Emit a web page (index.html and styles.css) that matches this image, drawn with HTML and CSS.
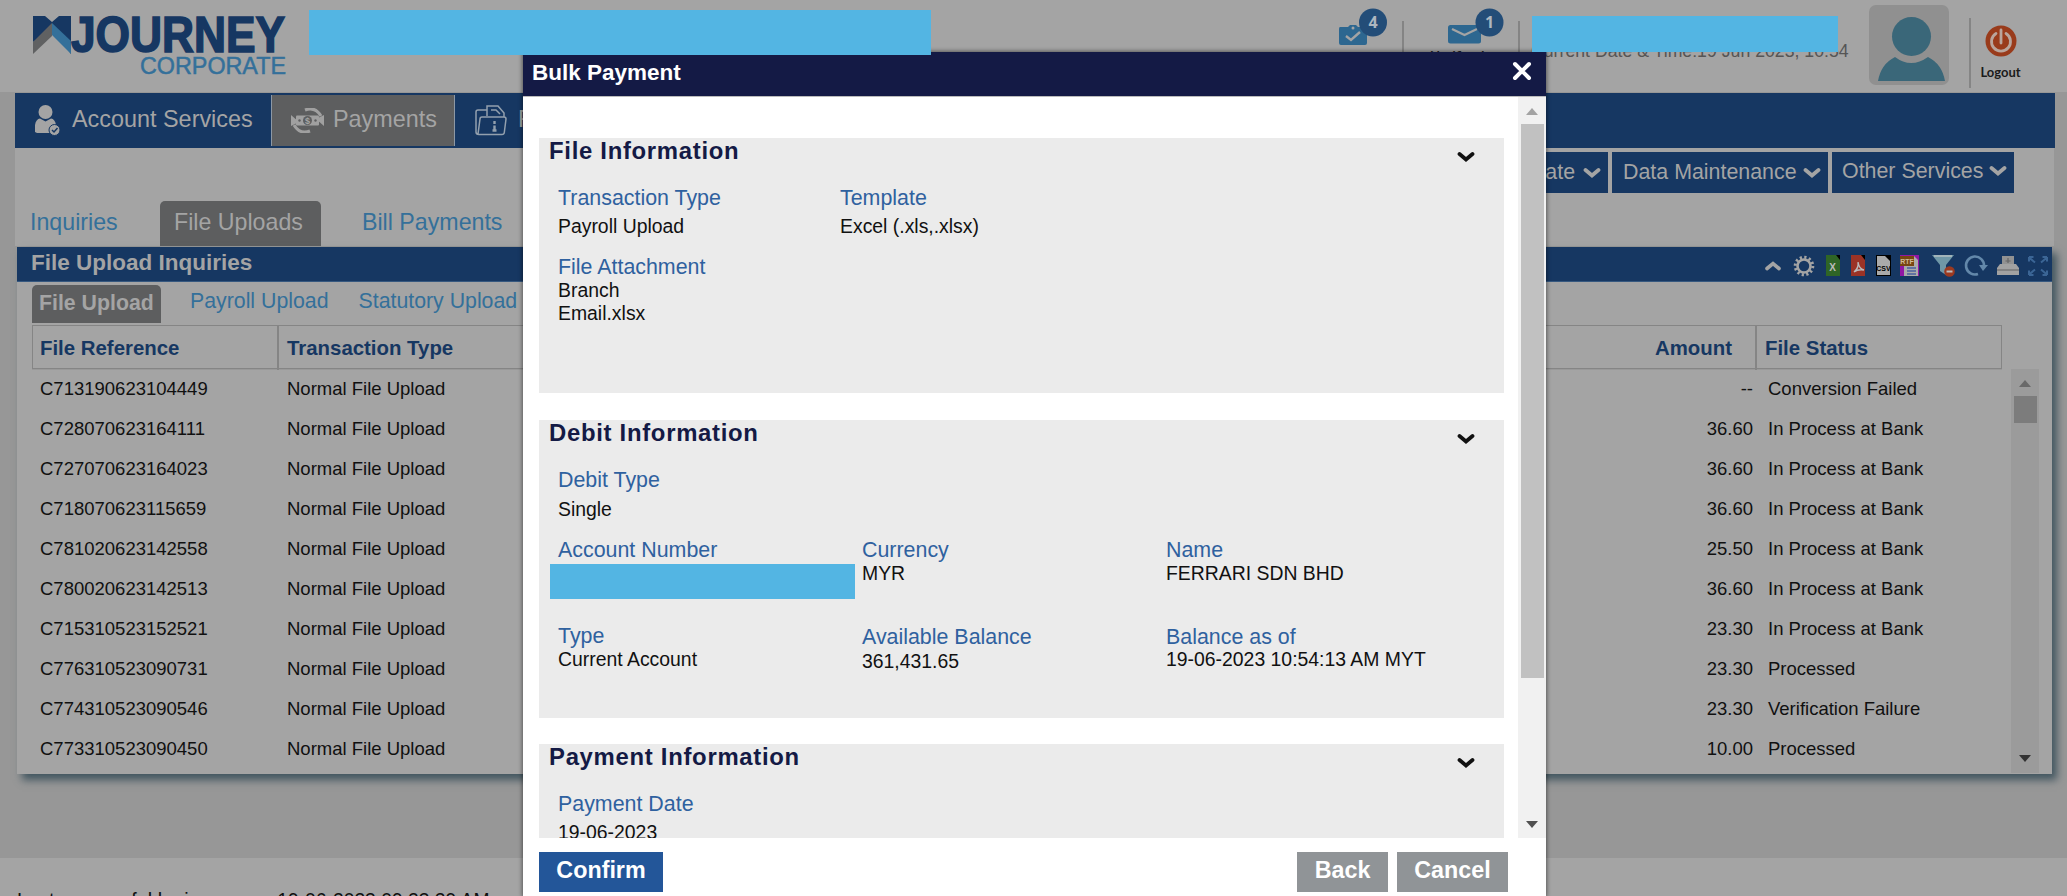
FILE: index.html
```
<!DOCTYPE html>
<html lang="en">
<head>
<meta charset="utf-8">
<title>Bulk Payment</title>
<link rel="stylesheet" href="styles.css">
</head>
<body>
<svg width="0" height="0" class="defs">
  <symbol id="chev" viewBox="0 0 18 12"><path d="M2.500 3l6.500 5.500L15.500 3" fill="none" stroke="currentColor" stroke-width="3.800" stroke-linecap="round"/></symbol>
</svg>
<div class="page">
  <header class="header">
    <svg class="logo" viewBox="0 0 254 62" width="254" height="62">
      <path d="M0 1h12l7 6 7-6h12v38L19 14 0 27z" fill="#163762"/>
      <path d="M0 27L19 8v13L0 39z" fill="#606162"/>
      <path d="M19 8l19 18v13L19 20z" fill="#34709a"/>
      <text x="38" y="37" class="logo-main" textLength="214" lengthAdjust="spacingAndGlyphs">JOURNEY</text>
      <text x="107" y="59" class="logo-sub" textLength="146" lengthAdjust="spacingAndGlyphs">CORPORATE</text>
    </svg>
    <div class="head-item tasks">
      <svg width="50" height="46" viewBox="0 0 50 46"><path d="M2 19h8l2-2h6l2 2h6q3 0 3 3v13q0 2-2 2H3q-2 0-2-2V21q0-2 1-2z" fill="#2d6790"/><path d="M8 28l5 4 9-8" fill="none" stroke="#a4a4a4" stroke-width="2.400"/><circle cx="15" cy="20" r="1.500" fill="#a4a4a4"/><circle cx="35" cy="14.500" r="14" fill="#234d78"/><text x="35" y="20" class="badge">4</text></svg>
    </div>
    <div class="head-item notes">
      <svg width="56" height="39" viewBox="0 0 56 39"><rect x="0" y="17" width="33" height="18.500" rx="2.500" fill="#2d6790"/><path d="M4 21l12.500 6L29 21" fill="none" stroke="#a4a4a4" stroke-width="2.200"/><circle cx="41.500" cy="14.500" r="14" fill="#234d78"/><text x="41.500" y="20" class="badge">1</text></svg>
      <span>Notifications</span>
    </div>
    <div class="clock">Current Date &amp; Time:19 Jun 2023, 10:54</div>
    <div class="avatar"><svg width="80" height="80" viewBox="0 0 80 80"><ellipse cx="42.500" cy="31.500" rx="19.500" ry="19.500" fill="#3a6779"/><path d="M9 76q3-17 17-24 16 12 33 0 14 7 17 24z" fill="#3a6779"/></svg></div>
    <div class="logout"><svg width="32" height="32" viewBox="0 0 32 32"><circle cx="16" cy="16" r="15.500" fill="#993b1b"/><path d="M11 8.500a9.500 9.500 0 1 0 10 0M16 5v13" fill="none" stroke="#b9a59c" stroke-width="2.800" stroke-linecap="round"/></svg><span>Logout</span></div>
  </header>

  <nav class="nav">
    <div class="nav-item first"><svg width="26" height="31" viewBox="0 0 26 31"><circle cx="10.500" cy="7" r="7" fill="#a4a4a4"/><path d="M0 27V20q1-6 5-6.500l5.500 3 5.500-3q4 .5 5 6.500v8H2z" fill="#a4a4a4"/><circle cx="19.500" cy="25" r="5.500" fill="#a4a4a4" stroke="#163762"/><path d="M17 25l2 2 3.500-4" fill="none" stroke="#163762" stroke-width="1.500"/></svg><span>Account Services</span></div>
    <div class="nav-item active"><svg width="35" height="25" viewBox="0 0 35 25"><path d="M15 2q10-4 16 6M20 23q-10 4-16-6" fill="none" stroke="#a0a0a0" stroke-width="3"/><path d="M34 7v11l-8-7zM1 18V7l8 7z" fill="#a0a0a0"/><rect x="6" y="7.500" width="23" height="10" rx="1" fill="#a0a0a0"/><circle cx="17.500" cy="12.500" r="4.500" fill="#5d5e5f"/><circle cx="9.500" cy="12.500" r="1.200" fill="#5d5e5f"/><circle cx="25.500" cy="12.500" r="1.200" fill="#5d5e5f"/><text x="17.500" y="16" class="coin">$</text></svg><span>Payments</span></div>
    <div class="nav-item reports"><svg width="32" height="31" viewBox="0 0 32 31" fill="none" stroke="#93a0ae" stroke-width="1.500"><path d="M12 5H3Q1 5 1 7v20q0 2.500 3 2.500h23q2 0 2.300-2L31 14q0-2-2-2H7q-2 0-2 2L3 29M12 11V1h11l6 7v4M16 5h5l4 4"/><path d="M19.500 16v3M19.500 20.500v5.500M17.500 25.500h4" stroke-width="2.400"/></svg><span>Reports</span></div>
  </nav>

  <main class="content">
    <div class="actions">
      <button class="act">Initiate <svg width="18" height="12"><use href="#chev"/></svg></button>
      <button class="act">Data Maintenance <svg width="18" height="12"><use href="#chev"/></svg></button>
      <button class="act other">Other Services <svg width="18" height="12"><use href="#chev"/></svg></button>
    </div>
    <div class="tabs"><span class="tab inq">Inquiries</span><span class="tab on">File Uploads</span><span class="tab bill">Bill Payments</span></div>
  </main>

  <section class="panel">
    <div class="panel-title"><h2>File Upload Inquiries</h2>
      <svg class="tools" width="288" height="28" viewBox="0 0 288 28">
        <path d="M3 16.500l6-5 6 5" fill="none" stroke="#a4a4a4" stroke-width="3.600" stroke-linecap="round"/>
        <circle cx="40" cy="14" r="8.800" fill="none" stroke="#a4a4a4" stroke-width="3" stroke-dasharray="2.200 2.408"/><circle cx="40" cy="14" r="6.500" fill="none" stroke="#a4a4a4" stroke-width="2.600"/>
        <path d="M62 3h14v21H62z" fill="#2f6526"/><path d="M72 3h4v5z" fill="#000"/><text x="68.500" y="19" class="doc">X</text>
        <path d="M87 3h14v21H87z" fill="#9b3326"/><path d="M97 3h4v5z" fill="#000"/><path d="M90 20q5-4 4-10 1 7 6 8-6-1-10 2z" fill="none" stroke="#bbb" stroke-width="1.400"/>
        <path d="M112 3h15v21h-15z" fill="#000"/><path d="M113 4h8l5 5v14h-13z" fill="#aaa"/><text x="119.500" y="19" class="csv">CSV</text>
        <path d="M136 3h19v21h-19z" fill="#9217a4"/><path d="M140 4h10l4 4v16h-14z" fill="#aaa"/><path d="M143 16h9m-9 3h9m-9 3h9" stroke="#4b62a0" stroke-width="1.400"/><path d="M136 4h14v10h-14z" fill="#784611"/><text x="143" y="12" class="rtf">RTF</text>
        <path d="M168 3h22l-8 10v10l-6-4v-6z" fill="#6f97a7"/><path d="M170 4h18" stroke="#a2b4ba" stroke-width="2"/><circle cx="185.500" cy="19.500" r="5.300" fill="#9b3920"/><path d="M182.500 19.500h6" stroke="#bbb" stroke-width="2"/>
        <path d="M214 22a9 9 0 1 1 6-8" fill="none" stroke="#6388aa" stroke-width="2.600"/><path d="M215 13h9l-5 6z" fill="#6388aa"/>
        <path d="M238 4h12v9h-12z" fill="#929292"/><path d="M236 12h16l3 4v7h-22v-7z" fill="#a2a2a2"/><path d="M233 18h22" stroke="#777" stroke-width="1.500"/><path d="M244 6v5m-2.500-2h5" stroke="#666" stroke-width="1.200"/>
        <path d="M265 5.500l6 5M265 5h4.500m-4.500 0v4.500M283 5.500l-6 5m6-5.500h-4.500m4.500 0v4.500M265 22.500l6-5m-6 5.500h4.500m-4.500 0v-4.500M283 22.500l-6-5m6 5.500h-4.500m4.500 0v-4.500" stroke="#3b6595" stroke-width="2"/>
      </svg>
    </div>
    <div class="subtabs"><b class="sub-on">File Upload</b><span>Payroll Upload</span><span>Statutory Upload</span></div>
    <div class="thead"><div>File Reference</div><div>Transaction Type</div><div class="amt">Amount</div><div>File Status</div></div>
    <div class="tbody">
      <div class="rows">
        <div class="row"><i>C713190623104449</i><i>Normal File Upload</i><i class="amt">--</i><i>Conversion Failed</i></div>
        <div class="row"><i>C728070623164111</i><i>Normal File Upload</i><i class="amt">36.60</i><i>In Process at Bank</i></div>
        <div class="row"><i>C727070623164023</i><i>Normal File Upload</i><i class="amt">36.60</i><i>In Process at Bank</i></div>
        <div class="row"><i>C718070623115659</i><i>Normal File Upload</i><i class="amt">36.60</i><i>In Process at Bank</i></div>
        <div class="row"><i>C781020623142558</i><i>Normal File Upload</i><i class="amt">25.50</i><i>In Process at Bank</i></div>
        <div class="row"><i>C780020623142513</i><i>Normal File Upload</i><i class="amt">36.60</i><i>In Process at Bank</i></div>
        <div class="row"><i>C715310523152521</i><i>Normal File Upload</i><i class="amt">23.30</i><i>In Process at Bank</i></div>
        <div class="row"><i>C776310523090731</i><i>Normal File Upload</i><i class="amt">23.30</i><i>Processed</i></div>
        <div class="row"><i>C774310523090546</i><i>Normal File Upload</i><i class="amt">23.30</i><i>Verification Failure</i></div>
        <div class="row"><i>C773310523090450</i><i>Normal File Upload</i><i class="amt">10.00</i><i>Processed</i></div>
      </div>
      <div class="scroll dim"><div class="up"></div><div class="thumb"></div><div class="down"></div></div>
    </div>
  </section>

  <footer class="footer">Last successful login was on <span>19-06-2023 09:23:29 AM</span></footer>

  <div class="modal">
    <div class="modal-head"><h1>Bulk Payment</h1><svg width="20" height="20" viewBox="0 0 20 20"><path d="M3 3l14 14M17 3L3 17" stroke="#fff" stroke-width="4" stroke-linecap="round"/></svg></div>
    <div class="modal-body">
      <div class="cards">
        <section class="card file">
          <div class="card-head"><h3>File Information</h3><svg width="18" height="12"><use href="#chev"/></svg></div>
          <div class="fields two">
            <div class="field"><label>Transaction Type</label><p>Payroll Upload</p></div>
            <div class="field"><label>Template</label><p>Excel (.xls,.xlsx)</p></div>
          </div>
          <div class="fields attach"><div class="field tight"><label>File Attachment</label><p>Branch<br>Email.xlsx</p></div></div>
        </section>
        <section class="card debit">
          <div class="card-head"><h3>Debit Information</h3><svg width="18" height="12"><use href="#chev"/></svg></div>
          <div class="fields"><div class="field"><label>Debit Type</label><p>Single</p></div></div>
          <div class="fields acct">
            <div class="field tight"><label>Account Number</label><div class="mask"></div></div>
            <div class="field tight"><label>Currency</label><p>MYR</p></div>
            <div class="field tight"><label>Name</label><p>FERRARI SDN BHD</p></div>
          </div>
          <div class="fields bal">
            <div class="field tight"><label>Type</label><p>Current Account</p></div>
            <div class="field tight low"><label>Available Balance</label><p>361,431.65</p></div>
            <div class="field tight asof"><label>Balance as of</label><p>19-06-2023 10:54:13 AM MYT</p></div>
          </div>
        </section>
        <section class="card pay">
          <div class="card-head"><h3>Payment Information</h3><svg width="18" height="12"><use href="#chev"/></svg></div>
          <div class="fields"><div class="field"><label>Payment Date</label><p>19-06-2023</p></div></div>
        </section>
      </div>
      <div class="scroll"><div class="up"></div><div class="thumb"></div><div class="down"></div></div>
    </div>
    <div class="modal-foot"><button class="btn primary">Confirm</button><button class="btn back">Back</button><button class="btn cancel">Cancel</button></div>
  </div>
  <div class="redact one"></div>
  <div class="redact user"></div>
</div>
</body>
</html>
```
FILE: styles.css
```
*{box-sizing:border-box}
body{margin:0;font-family:"Liberation Sans",Arial,sans-serif}
h1,h2,h3,p{margin:0}
i{font-style:normal}
button{border:0;padding:0;margin:0;font-family:inherit}
.defs{position:absolute}
.page{position:relative;width:2067px;height:896px;overflow:hidden;background:#979797;display:flex;flex-direction:column}

.header{height:92px;flex:none;background:#a4a4a4;display:flex;align-items:flex-start;padding-left:33px}
.logo{margin-top:15px;width:254px;overflow:visible}
.logo-main{font-weight:bold;font-size:50px;fill:#163762;stroke:#163762;stroke-width:1.600px}
.logo-sub{font-size:24px;fill:#34709a;stroke:#34709a;stroke-width:.5px}
.head-item{flex:none}
.tasks{margin:8px 0 0 1051px;width:50px}
.tasks svg,.notes svg{display:block}
.notes{margin:8px 0 0 14px;width:118px;height:60px;border-left:2px solid #848484;border-right:2px solid #848484;padding-left:44px;border-image:linear-gradient(transparent 22%,#848484 22%) 1}
.notes span{display:block;margin:2px 0 0 -18px;font:bold 13px/15px Lato,sans-serif;color:#222}
.badge{font:bold 16px "Open Sans",sans-serif;fill:#aeb7c0;text-anchor:middle}
.clock{margin:41px 0 0 11px;width:338px;white-space:nowrap;font-size:17.7px;line-height:20px;color:#555}
.avatar{width:80px;height:80px;margin-top:5px;flex:none;background:#909090;border-radius:7px}
.logout{margin:18px 0 0 20px;height:70px;width:61px;padding:7px 0 0;border-left:2px solid #858585;display:flex;flex-direction:column;align-items:center}
.logout svg{flex:none}
.logout span{font:bold 13px/16px Lato,sans-serif;color:#1b1b1b;margin-top:7px}

.nav{height:55px;margin:1px 12px 0 15px;flex:none;background:#163762;display:flex;padding:2px 0;color:#a4a4a4;font-size:23.4px}
.nav-item{display:flex;align-items:center;flex:none}
.nav-item span{position:relative;top:-1px}
.first{width:256px;padding-left:20px;gap:11px}
.active{width:184px;background:#5d5e5f;border-left:1px solid #8c98a5;border-right:1px solid #8c98a5;padding-left:18px;gap:8px}
.reports{padding-left:20px;gap:11px}
.coin{font:bold 9px "Liberation Sans",sans-serif;fill:#a4a4a4;text-anchor:middle}

.content{height:98px;flex:none;margin:0 13px 0 15px;background:#a4a4a4;display:flex;flex-direction:column}
.actions{display:flex;justify-content:flex-end;gap:4px;padding:4px 40px 0 0;height:53px}
.act{background:#163762;color:#a4a4a4;font-size:21.4px;height:41px;width:216px;padding:0 0 0 11px;display:flex;align-items:center;gap:6px;white-space:nowrap}
.act:first-child{width:110px;padding-left:14px;gap:8px}
.act.other{width:182px;padding:0 0 3px 10px}
.tabs{display:flex;font-size:23.2px;color:#34709a;line-height:43px}
.tab{height:45px}
.inq{padding-left:15px;width:145px}
.on{width:161px;background:#5d5e5f;color:#a4a4a4;border-radius:5px 5px 0 0;padding-left:14px}
.bill{padding-left:41px}

.panel{flex:none;height:527px;margin:1px 15px 0 17px;background:#a4a4a4;box-shadow:5px 6px 8px #425660;display:flex;flex-direction:column}
.panel-title{height:35px;flex:none;background:#163762;color:#a4a4a4;display:flex;justify-content:space-between;padding:0 0 0 14px;border-bottom:1px solid #36587f}
.panel-title h2{font-size:22.500px;line-height:31px}
.tools{margin-top:5px}
.doc{font:bold 10px "Liberation Sans",sans-serif;fill:#bbb;text-anchor:middle}
.csv,.rtf{font:bold 7px "Liberation Sans",sans-serif;text-anchor:middle}
.rtf{fill:#d0b996}
.subtabs{height:43px;flex:none;display:flex;padding:3px 0 0 15px;font-size:21.3px;line-height:32px;color:#34709a}
.sub-on{width:129px;height:38px;background:#5d5e5f;color:#a4a4a4;border-radius:5px 5px 0 0;padding-left:7px;line-height:36px}
.subtabs span{margin-left:29px}
.subtabs span:last-child{margin-left:30px}
.thead{height:44px;flex:none;margin:0 50px 0 15px;border:1px solid #858585;display:grid;grid-template-columns:246px 1233px 245px 1fr;font-weight:bold;font-size:20.4px;line-height:44px;color:#163762;box-shadow:0 1px 0 #999}
.thead div{padding-left:7px;border-right:2px solid #858585}
.thead div:nth-child(2){padding-left:8px}
.thead div:last-child{padding-left:8px}
.thead div:nth-child(2),.thead div:last-child{border-right:0}
.thead .amt{padding:0 23px 0 0}
.amt{text-align:right}
.tbody{display:flex;height:404px}
.rows{width:1979px;margin-left:15px;flex:none}
.row{display:grid;grid-template-columns:245px 1234px 242px 1fr;font-size:18.5px;line-height:40px;height:40px;color:#101010}
.row i{padding-left:8px}
.row i:nth-child(2){padding-left:10px}
.row .amt{padding:0}
.row i:last-child{padding-left:15px}

.scroll{width:28px;flex:none;background:#f1f1f1;display:flex;flex-direction:column;align-items:center}
.up,.down{border:6px solid transparent}
.up{border-top:0;border-bottom:7px solid #a3a3a3;margin-top:11px}
.down{border-bottom:0;border-top:7px solid #505050;margin:auto 0 10px}
.thumb{width:23px;height:554px;background:#c1c1c1;margin-top:9px}
.dim{background:#9b9b9b}
.dim .up{border-bottom-color:#696969}
.dim .down{border-top-color:#333;margin-bottom:11px}
.dim .thumb{height:27px;background:#7c7c7c}

.footer{height:38px;flex:none;margin-top:84px;background:#a4a4a4;padding:30px 0 0 17px;font-size:19.8px;line-height:24px;color:#101010;white-space:nowrap}
.footer span{font-size:19.300px;margin-left:4px}

.modal{position:absolute;left:523px;top:52px;width:1023px;height:844px;background:#fff;box-shadow:0 0 4px 1px rgba(0,0,0,.45);display:flex;flex-direction:column}
.modal-head{height:44px;flex:none;background:#141a45;color:#fff;display:flex;justify-content:space-between;padding:0 14px 0 9px}
.modal-head h1{font-size:22.5px;line-height:41px}
.modal-head svg{margin-top:9px}
.modal-body{height:742px;flex:none;border-top:1px solid #bbb;display:flex;justify-content:space-between;overflow:hidden}
.cards{width:965px;margin-left:16px;padding-top:41px}
.card{background:#ebebeb;padding-left:19px}
.file{height:255px;margin-bottom:27px}
.debit{height:298px;margin-bottom:26px}
.pay{height:200px}
.card-head{display:flex;justify-content:space-between;height:25px;margin-left:-9px;padding-right:29px;color:#111}
.card-head h3{font-size:23.9px;line-height:26px;letter-spacing:.7px;color:#141a45}
.card-head svg{margin-top:13px}
.fields{display:grid;grid-template-columns:304px 304px 1fr;margin-top:23px}
.two{grid-template-columns:282px 1fr}
.field label{display:block;font-size:21.4px;line-height:24px;color:#2f619f}
.field p{font-size:19.4px;line-height:23px;margin-top:5px;color:#111}
.field.tight p{margin-top:0}
.fields.attach{margin-top:17px}
.debit .field:not(.tight) p{margin-top:6px}
.fields.acct{margin-top:17px}
.fields.bal{margin-top:25px}
.low{padding-top:1px}
.low p{padding-top:1px}
.asof{padding-top:1px}
.field.asof p{margin-top:-1px}
.mask{width:305px;height:35px;background:#53b5e3;margin:2px 0 0 -8px}
.modal-foot{display:flex;padding:14px 38px 0 16px;height:58px}
.btn{height:40px;color:#fff;font-weight:bold;font-size:23.3px;line-height:36px;padding-bottom:4px;background:#909497}
.primary{width:124px;background:#235699;margin-right:auto}
.back{width:91px;margin-right:9px}
.cancel{width:111px}
.redact{position:absolute;background:#53b5e3}
.redact.one{left:309px;top:10px;width:622px;height:45px}
.redact.user{left:1532px;top:16px;width:306px;height:36px}
```
